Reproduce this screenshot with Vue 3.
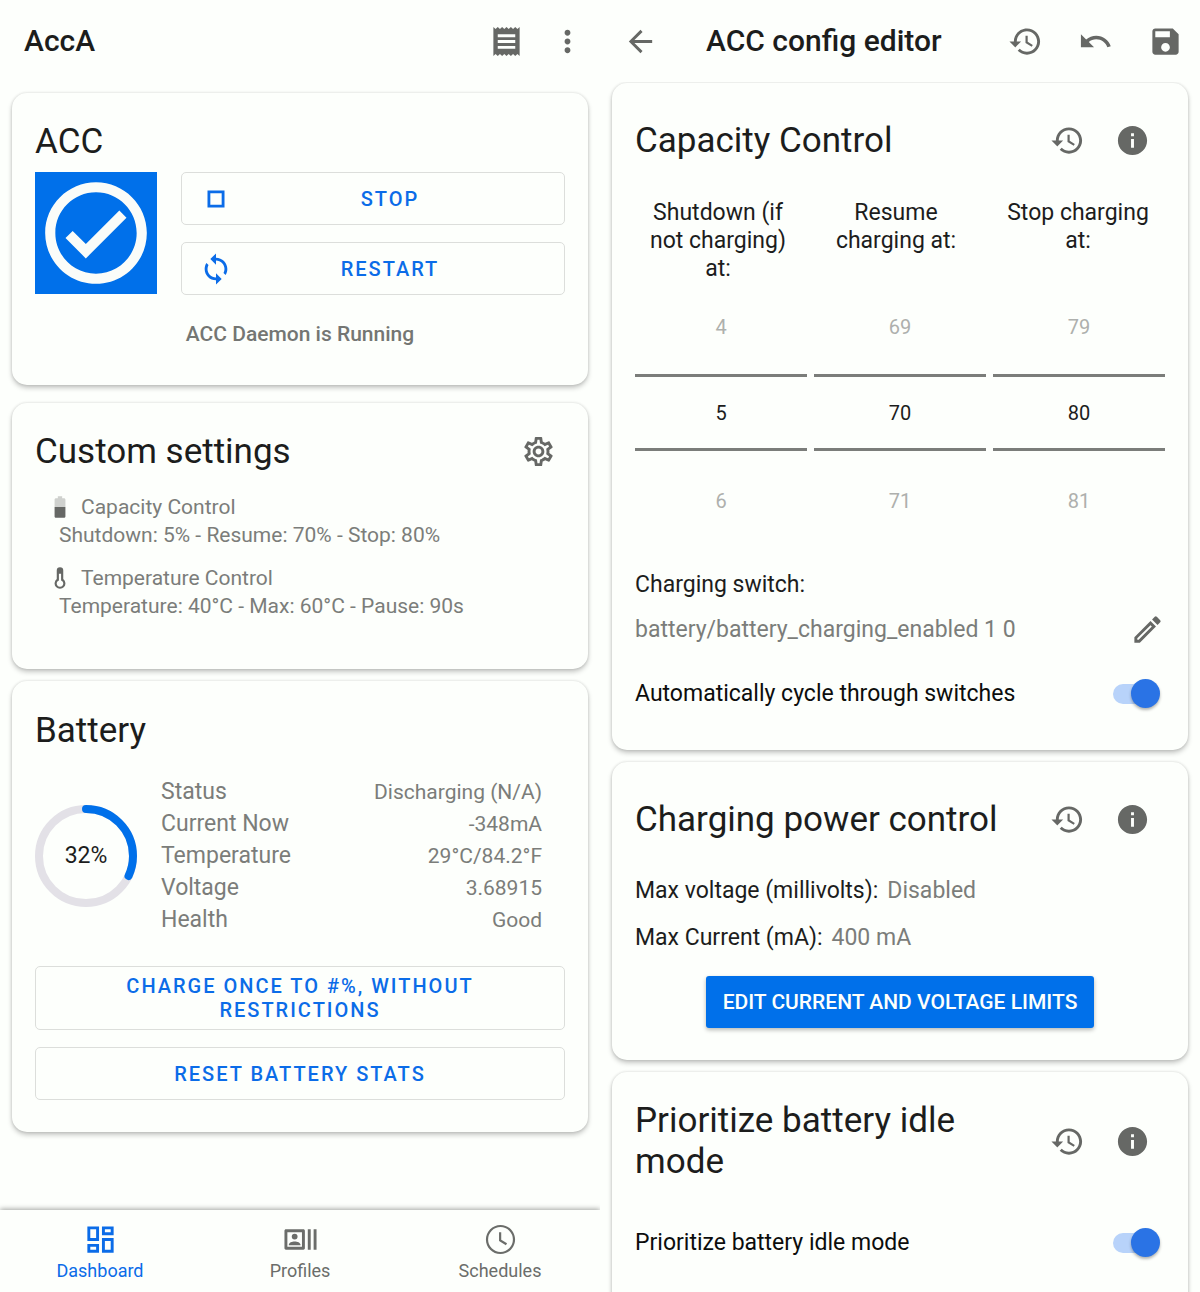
<script setup>
import { h, reactive, ref } from 'vue'

const icons = {
  receipt: 'M18 17H6v-2h12v2zm0-4H6v-2h12v2zm0-4H6V7h12v2zM3 22l1.500-1.500L6 22l1.500-1.500L9 22l1.500-1.500L12 22l1.500-1.500L15 22l1.500-1.500L18 22l1.500-1.500L21 22V2l-1.500 1.500L18 2l-1.500 1.500L15 2l-1.500 1.500L12 2l-1.500 1.500L9 2 7.500 3.500 6 2 4.500 3.500 3 2v20z',
  more: 'M12 8c1.100 0 2-.9 2-2s-.9-2-2-2-2 .9-2 2 .9 2 2 2zm0 2c-1.100 0-2 .9-2 2s.9 2 2 2 2-.9 2-2-.9-2-2-2zm0 6c-1.100 0-2 .9-2 2s.9 2 2 2 2-.9 2-2-.9-2-2-2z',
  check: 'M16.590 7.580L10 14.170l-2.590-2.580L6 13l4 4 8-8-1.410-1.420zM12 2C6.480 2 2 6.480 2 12s4.480 10 10 10 10-4.480 10-10S17.520 2 12 2zm0 18c-4.420 0-8-3.580-8-8s3.580-8 8-8 8 3.580 8 8-3.580 8-8 8z',
  stop: 'M16 8v8H8V8h8m2-2H6v12h12V6z',
  sync: 'M12 4V1L8 5l4 4V6c3.310 0 6 2.690 6 6 0 1.010-.25 1.970-.7 2.800l1.460 1.460C19.540 15.030 20 13.570 20 12c0-4.420-3.580-8-8-8zm0 14c-3.310 0-6-2.690-6-6 0-1.010.25-1.970.7-2.800L5.240 7.740C4.460 8.970 4 10.430 4 12c0 4.420 3.580 8 8 8v3l4-4-4-4v3z',
  gear: 'M19.430 12.980c.04-.32.07-.64.07-.98s-.03-.66-.07-.98l2.110-1.650c.19-.15.24-.42.12-.64l-2-3.460c-.09-.16-.26-.25-.44-.25-.06 0-.12.01-.17.03l-2.490 1c-.52-.4-1.080-.73-1.690-.98l-.38-2.650C14.460 2.180 14.250 2 14 2h-4c-.25 0-.46.18-.49.42l-.38 2.650c-.61.25-1.170.59-1.690.98l-2.490-1c-.06-.02-.12-.03-.18-.03-.17 0-.34.09-.43.25l-2 3.460c-.13.22-.07.49.12.64l2.110 1.650c-.04.32-.07.65-.07.98s.03.66.07.98l-2.110 1.650c-.19.15-.24.42-.12.64l2 3.460c.09.16.26.25.44.25.06 0 .12-.01.17-.03l2.490-1c.52.4 1.080.73 1.690.98l.38 2.650c.03.24.24.42.49.42h4c.25 0 .46-.18.49-.42l.38-2.650c.61-.25 1.170-.59 1.690-.98l2.490 1c.06.02.12.03.18.03.17 0 .34-.09.43-.25l2-3.460c.12-.22.07-.49-.12-.64l-2.110-1.650zm-1.980-1.710c.04.31.05.52.05.73s-.02.43-.05.73l-.14 1.130.89.7 1.080.84-.7 1.210-1.270-.51-1.040-.42-.9.68c-.43.32-.84.56-1.250.73l-1.060.43-.16 1.130-.2 1.350h-1.400l-.19-1.350-.16-1.130-1.060-.43c-.43-.18-.83-.41-1.230-.71l-.91-.7-1.060.43-1.270.51-.7-1.210 1.080-.84.89-.7-.14-1.130c-.03-.31-.05-.54-.05-.74s.02-.43.05-.73l.14-1.130-.89-.7-1.080-.84.7-1.210 1.270.51 1.040.42.9-.68c.43-.32.84-.56 1.250-.73l1.060-.43.16-1.130.2-1.350h1.390l.19 1.350.16 1.130 1.060.43c.43.18.83.41 1.230.71l.91.7 1.060-.43 1.270-.51.7 1.210-1.070.85-.89.7.14 1.130zM12 8c-2.210 0-4 1.790-4 4s1.790 4 4 4 4-1.790 4-4-1.790-4-4-4zm0 6c-1.100 0-2-.9-2-2s.9-2 2-2 2 .9 2 2-.9 2-2 2z',
  thermo: 'M15 13V5a3 3 0 0 0-6 0v8a5 5 0 1 0 6 0zM11 8h2v6.200a3 3 0 1 1-2 0z',
  dashboard: 'M19 5v2h-4V5h4M9 5v6H5V5h4m10 8v6h-4v-6h4M9 17v2H5v-2h4M21 3h-8v6h8V3zM11 3H3v10h8V3zm10 8h-8v10h8V11zm-10 4H3v6h8v-6z',
  profiles: 'M21 5h2v14h-2zm-4 0h2v14h-2zm-3 0H2c-.55 0-1 .45-1 1v12c0 .55.45 1 1 1h12c.55 0 1-.45 1-1V6c0-.55-.45-1-1-1zm-1 12H3V7h10v10zM8 12a2 2 0 1 0 0-4 2 2 0 0 0 0 4zM4 16v-.4c0-1.500 2.200-2.300 4-2.300s4 .8 4 2.300v.4z',
  clock: 'M11.990 2C6.470 2 2 6.480 2 12s4.470 10 9.990 10C17.520 22 22 17.520 22 12S17.520 2 11.990 2zM12 20.500a8.500 8.500 0 1 1 0-17 8.500 8.500 0 0 1 0 17zM12.500 7H11v6l4.700 2.900.8-1.300-4-2.400z',
  back: 'M20 11H7.830l5.590-5.590L12 4l-8 8 8 8 1.410-1.410L7.830 13H20v-2z',
  history: 'M13 3c-4.970 0-9 4.030-9 9H1l3.890 3.890.07.14L9 12H6c0-3.870 3.130-7 7-7s7 3.130 7 7-3.130 7-7 7c-1.930 0-3.680-.79-4.940-2.060l-1.420 1.420C8.270 19.990 10.510 21 13 21c4.970 0 9-4.030 9-9s-4.030-9-9-9zm-1 5v5l4.280 2.540.72-1.210-3.500-2.080V8H12z',
  undo: 'M12.500 8c-2.650 0-5.050.99-6.900 2.600L2 7v9h9l-3.620-3.620c1.390-1.160 3.160-1.880 5.120-1.880 3.540 0 6.550 2.310 7.600 5.500l2.370-.78C21.080 11.030 17.150 8 12.500 8z',
  save: 'M17 3H5c-1.110 0-2 .9-2 2v14c0 1.100.89 2 2 2h14c1.100 0 2-.9 2-2V7l-4-4zm-5 16c-1.660 0-3-1.340-3-3s1.340-3 3-3 3 1.340 3 3-1.340 3-3 3zm3-10H5V5h10v4z',
  info: 'M12 2C6.480 2 2 6.480 2 12s4.480 10 10 10 10-4.480 10-10S17.520 2 12 2zm1 15h-2v-6h2v6zm0-8h-2V7h2v2z',
  edit: 'M3 17.250V21h3.750L17.810 9.940l-3.750-3.750L3 17.250zM5.920 19H5v-.92l9.060-9.060.92.920L5.920 19zM20.710 5.630l-2.340-2.340a1 1 0 0 0-1.410 0l-1.830 1.830 3.750 3.750 1.830-1.830a1 1 0 0 0 0-1.410z',
}

const Icon = (props) =>
  h('svg', { viewBox: '0 0 24 24', fill: 'currentColor', 'aria-hidden': 'true' }, [
    h('path', { d: icons[props.name], 'fill-rule': props.name === 'thermo' ? 'evenodd' : 'nonzero' }),
  ])
Icon.props = ['name']

const level = 32
const stats = [
  ['Status', 'Discharging (N/A)'],
  ['Current Now', '-348mA'],
  ['Temperature', '29°C/84.2°F'],
  ['Voltage', '3.68915'],
  ['Health', 'Good'],
]
const tabs = [
  { name: 'Dashboard', icon: 'dashboard' },
  { name: 'Profiles', icon: 'profiles' },
  { name: 'Schedules', icon: 'clock' },
]
const pickers = reactive([
  { id: 'shutdown', label: 'Shutdown (if not charging) at:', value: 5 },
  { id: 'resume', label: 'Resume charging at:', value: 70 },
  { id: 'stop', label: 'Stop charging at:', value: 80 },
])
const cycle = ref(true)
const idle = ref(true)
</script>

<template>
  <div class="app">
    <section class="screen">
      <header class="bar">
        <h1>AccA</h1>
        <div class="actions">
          <button class="icon" aria-label="Logs"><Icon name="receipt" /></button>
          <button class="icon" aria-label="More"><Icon name="more" /></button>
        </div>
      </header>

      <main class="content dashboard">
        <article class="card daemon">
          <h2>ACC</h2>
          <div class="controls">
            <div class="tile"><Icon name="check" /></div>
            <div class="buttons">
              <button class="outlined with-icon"><Icon name="stop" /><span>STOP</span></button>
              <button class="outlined with-icon"><Icon name="sync" /><span>RESTART</span></button>
            </div>
          </div>
          <p class="state">ACC Daemon is Running</p>
        </article>

        <article class="card settings">
          <div class="head">
            <h2>Custom settings</h2>
            <button class="icon" aria-label="Edit settings"><Icon name="gear" /></button>
          </div>
          <div class="setting">
            <h3>
              <svg viewBox="0 0 24 24" fill="currentColor" aria-hidden="true">
                <path opacity=".3" d="M17 5.300C17 4.600 16.400 4 15.700 4H14V2h-4v2H8.300C7.600 4 7 4.600 7 5.300V12h10z" />
                <path d="M7 12v8.700c0 .7.6 1.300 1.300 1.300h7.300c.7 0 1.400-.6 1.400-1.300V12z" />
              </svg>
              Capacity Control
            </h3>
            <p>Shutdown: 5% - Resume: 70% - Stop: 80%</p>
          </div>
          <div class="setting">
            <h3><Icon name="thermo" />Temperature Control</h3>
            <p>Temperature: 40°C - Max: 60°C - Pause: 90s</p>
          </div>
        </article>

        <article class="card battery">
          <h2>Battery</h2>
          <div class="overview">
            <div class="ring">
              <svg viewBox="0 0 102 102" fill="none" stroke-width="8" aria-hidden="true">
                <circle cx="51" cy="51" r="47" stroke="#e3e1e7" />
                <circle
                  cx="51" cy="51" r="47" stroke="#0070ea" stroke-linecap="round"
                  pathLength="100" :stroke-dasharray="`${level} 100`" transform="rotate(-90 51 51)"
                />
              </svg>
              <span>{{ level }}%</span>
            </div>
            <table>
              <tbody>
                <tr v-for="[name, value] in stats" :key="name">
                  <th scope="row">{{ name }}</th>
                  <td>{{ value }}</td>
                </tr>
              </tbody>
            </table>
          </div>
          <div class="buttons">
            <button class="outlined">CHARGE ONCE TO #%, WITHOUT RESTRICTIONS</button>
            <button class="outlined">RESET BATTERY STATS</button>
          </div>
        </article>
      </main>

      <nav class="tabs">
        <a v-for="(tab, i) in tabs" :key="tab.name" href="#" :class="{ active: i === 0 }">
          <Icon :name="tab.icon" />
          <span>{{ tab.name }}</span>
        </a>
      </nav>
    </section>

    <section class="screen">
      <header class="bar editor-bar">
        <button class="icon" aria-label="Back"><Icon name="back" /></button>
        <h1>ACC config editor</h1>
        <div class="actions">
          <button class="icon" aria-label="Restore defaults"><Icon name="history" /></button>
          <button class="icon" aria-label="Undo"><Icon name="undo" /></button>
          <button class="icon" aria-label="Save"><Icon name="save" /></button>
        </div>
      </header>

      <main class="content">
        <article class="card capacity">
          <div class="head">
            <h2>Capacity Control</h2>
            <div class="actions">
              <button class="icon" aria-label="Restore"><Icon name="history" /></button>
              <button class="icon" aria-label="Info"><Icon name="info" /></button>
            </div>
          </div>
          <div class="picker-labels">
            <label v-for="p in pickers" :key="p.id" :for="p.id">{{ p.label }}</label>
          </div>
          <div class="pickers">
            <div v-for="p in pickers" :key="p.id" class="picker">
              <button @click="p.value--">{{ p.value - 1 }}</button>
              <input :id="p.id" v-model.number="p.value" type="text" inputmode="numeric" />
              <button @click="p.value++">{{ p.value + 1 }}</button>
            </div>
          </div>
          <p class="switch-title">Charging switch:</p>
          <div class="switch-path">
            <span class="muted">battery/battery_charging_enabled 1 0</span>
            <button class="icon" aria-label="Edit charging switch"><Icon name="edit" /></button>
          </div>
          <label class="toggle">
            Automatically cycle through switches
            <input v-model="cycle" type="checkbox" role="switch" />
          </label>
        </article>

        <article class="card power">
          <div class="head">
            <h2>Charging power control</h2>
            <div class="actions">
              <button class="icon" aria-label="Restore"><Icon name="history" /></button>
              <button class="icon" aria-label="Info"><Icon name="info" /></button>
            </div>
          </div>
          <p class="limit">Max voltage (millivolts): <span class="muted">Disabled</span></p>
          <p class="limit">Max Current (mA): <span class="muted">400 mA</span></p>
          <button class="filled">EDIT CURRENT AND VOLTAGE LIMITS</button>
        </article>

        <article class="card idle">
          <div class="head">
            <h2>Prioritize battery idle mode</h2>
            <div class="actions">
              <button class="icon" aria-label="Restore"><Icon name="history" /></button>
              <button class="icon" aria-label="Info"><Icon name="info" /></button>
            </div>
          </div>
          <label class="toggle">
            Prioritize battery idle mode
            <input v-model="idle" type="checkbox" role="switch" />
          </label>
        </article>
      </main>
    </section>
  </div>
</template>

<style>
body {
  margin: 0;
  background: #fdfffc;
}
</style>

<style scoped>
.app {
  display: grid;
  grid-template-columns: 1fr 1fr;
  height: 100vh;
  font-family: Roboto, 'Liberation Sans', sans-serif;
  font-size: 23px;
  line-height: 28px;
  color: #1c1d1c;
}
.app * {
  box-sizing: border-box;
}
h1, h2, h3, p {
  margin: 0;
  font-weight: 400;
}
button, input {
  margin: 0;
  padding: 0;
  border: 0;
  background: none;
  font: inherit;
  color: inherit;
}
button {
  cursor: pointer;
}
.screen {
  display: flex;
  flex-direction: column;
  min-width: 0;
  min-height: 0;
  overflow: hidden;
}
.bar {
  flex: none;
  display: flex;
  align-items: center;
  height: 82px;
  padding: 0 15px 0 24px;
}
.bar h1 {
  flex: 1;
  font-size: 30px;
  font-weight: 500;
}
.editor-bar {
  padding: 0 17px 0 23px;
}
.editor-bar h1 {
  margin-left: 48px;
}
.actions {
  display: flex;
}
.bar .actions {
  gap: 26px;
}
.editor-bar .actions {
  gap: 35px;
}
.icon {
  flex: none;
  display: flex;
  color: #666865;
}
.icon svg {
  width: 35px;
  height: 35px;
}
.content {
  flex: 1;
  min-height: 0;
  overflow-y: auto;
  scrollbar-width: none;
  display: flex;
  flex-direction: column;
  gap: 12px;
  padding: 1px 12px 12px;
}
.dashboard {
  padding-top: 11px;
}
.card {
  flex: none;
  padding: 28px 23px 32px;
  border-radius: 15px;
  background: #fdfffc;
  box-shadow: 0 3px 5px rgba(0, 0, 0, 0.22), 0 0 3px rgba(0, 0, 0, 0.14);
}
h2 {
  font-size: 35px;
  line-height: 41px;
}
.head {
  display: flex;
  align-items: center;
  justify-content: space-between;
}
.head .actions {
  flex: none;
  gap: 30px;
  margin-right: 15px;
}
.muted {
  color: #7b7d7a;
}

.daemon {
  margin-bottom: 6px;
  padding-bottom: 39px;
}
.controls {
  display: flex;
  gap: 24px;
  margin-top: 10px;
}
.tile {
  flex: none;
  width: 122px;
  height: 122px;
  background: #0070ea;
  color: #fafcf9;
}
.tile svg {
  display: block;
}
.buttons {
  flex: 1;
  display: flex;
  flex-direction: column;
  gap: 17px;
}
.outlined {
  min-height: 53px;
  padding: 7px 64px;
  border: 1px solid #dcdedb;
  border-radius: 5px;
  font-size: 20px;
  font-weight: 500;
  line-height: 24px;
  letter-spacing: 2px;
  color: #0b6ce8;
}
.with-icon {
  display: flex;
  align-items: center;
  padding: 0 17px;
}
.with-icon svg {
  width: 34px;
  height: 34px;
}
.with-icon span {
  flex: 1;
}
.state {
  margin-top: 27px;
  font-size: 21px;
  font-weight: 500;
  line-height: 24px;
  text-align: center;
  color: #747673;
}

.settings {
  padding-bottom: 49px;
}
.settings .head .icon {
  margin-right: 9px;
}
.setting {
  margin-top: 15px;
  padding-left: 24px;
  font-size: 21px;
  color: #7b7d7a;
}
.head + .setting {
  margin-top: 21px;
}
.setting h3 {
  display: flex;
  align-items: center;
  gap: 8px;
  margin-left: -12px;
  font-size: 21px;
}
.setting h3 svg {
  width: 26px;
  height: 26px;
  color: #666865;
}

.battery {
  padding-top: 29px;
}
.overview {
  display: flex;
  align-items: center;
  gap: 24px;
  margin: 25px 23px 30px 0;
}
.ring {
  flex: none;
  display: grid;
  place-items: center;
  width: 102px;
  height: 102px;
}
.ring > * {
  grid-area: 1 / 1;
}
table {
  flex: 1;
  border-collapse: collapse;
  color: #7b7d7a;
}
th, td {
  height: 32px;
  padding: 0;
  font-weight: 400;
  text-align: left;
}
td {
  font-size: 21px;
  text-align: right;
}

.tabs {
  flex: none;
  display: grid;
  grid-template-columns: repeat(3, 1fr);
  height: 82px;
  box-shadow: 0 -1px 5px rgba(0, 0, 0, 0.36);
}
.tabs a {
  display: flex;
  flex-direction: column;
  align-items: center;
  padding-top: 12px;
  font-size: 18px;
  color: #6b6d6a;
  text-decoration: none;
}
.tabs svg {
  width: 35px;
  height: 35px;
}
.tabs .active {
  color: #0b6ce8;
}

.capacity {
  padding-top: 37px;
  padding-bottom: 41px;
}
.picker-labels {
  display: grid;
  grid-template-columns: 166fr 190fr 174fr;
  margin-top: 38px;
  text-align: center;
}
.picker-labels label {
  padding: 0 12px;
}
.pickers {
  display: grid;
  grid-template-columns: repeat(3, 1fr);
  gap: 7px;
}
.picker {
  display: grid;
  grid-template-rows: 91px 77px 92px;
  font-size: 20px;
  text-align: center;
}
.picker button {
  color: #aeb0ad;
}
.picker button:first-child {
  padding-bottom: 4px;
}
.picker button:last-child {
  padding-top: 8px;
}
.picker input {
  min-width: 0;
  border: solid #7b7d7a;
  border-width: 3px 0;
  text-align: center;
}
.switch-title {
  margin-top: 28px;
}
.switch-path {
  display: flex;
  align-items: center;
  justify-content: space-between;
  margin-top: 13px;
}
.toggle {
  display: flex;
  align-items: center;
  justify-content: space-between;
  color: #0c0d0c;
}
.switch-path + .toggle {
  margin-top: 32px;
}
.toggle input {
  appearance: none;
  position: relative;
  width: 47px;
  height: 30px;
  margin-right: 5px;
}
.toggle input::before {
  content: '';
  position: absolute;
  inset: 5px 7px 5px 0;
  border-radius: 10px;
  background: #d0d0d0;
}
.toggle input::after {
  content: '';
  position: absolute;
  top: 0;
  left: 0;
  width: 29px;
  height: 29px;
  border-radius: 50%;
  background: #f5f5f5;
  box-shadow: 0 2px 3px rgba(0, 0, 0, 0.3);
}
.toggle input:checked::before {
  background: #b8d3fa;
}
.toggle input:checked::after {
  left: 18px;
  background: #2a73e5;
}

.power {
  padding-top: 37px;
}
.limit {
  display: flex;
  gap: 9px;
  margin-top: 19px;
}
.head + .limit {
  margin-top: 37px;
}
.filled {
  display: block;
  height: 52px;
  margin: 24px auto 0;
  padding: 0 17px;
  border-radius: 3px;
  background: #0070ea;
  box-shadow: 0 2px 4px rgba(0, 0, 0, 0.28);
  font-size: 21px;
  font-weight: 500;
  color: #fdfffc;
}
.idle {
  padding-bottom: 72px;
}
.idle h2 {
  max-width: 360px;
}
.idle .toggle {
  margin-top: 46px;
}
</style>
